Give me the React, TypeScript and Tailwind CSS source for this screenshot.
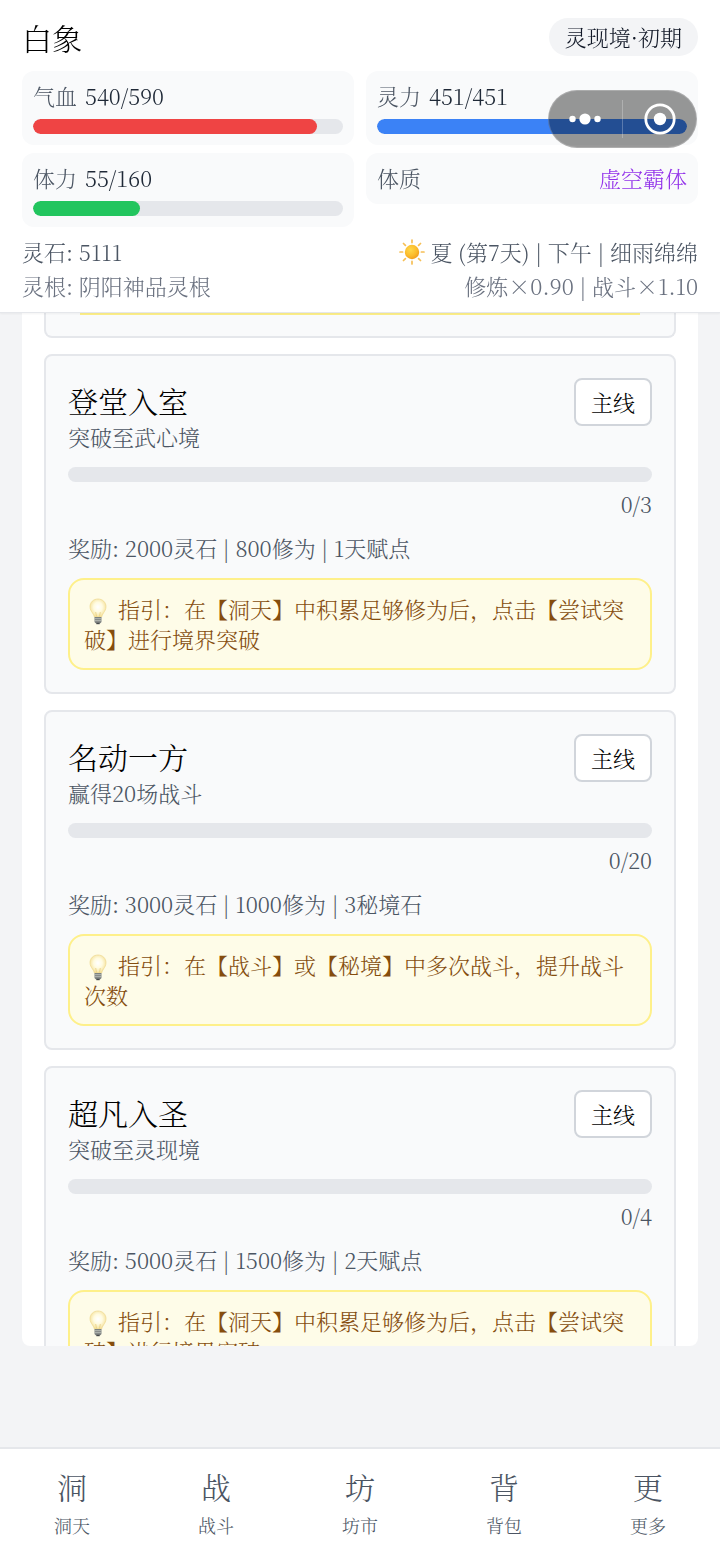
import clsx from 'clsx';

const stats = [
  { label: '气血', value: 540, max: 590, color: 'bg-[#ef4444]' },
  { label: '灵力', value: 451, max: 451, color: 'bg-[#3b82f6]' },
  { label: '体力', value: 55, max: 160, color: 'bg-[#22c55e]' },
];

const quests = [
  {
    title: '登堂入室',
    desc: '突破至武心境',
    current: 0,
    target: 3,
    reward: '2000灵石 | 800修为 | 1天赋点',
    hint: '在【洞天】中积累足够修为后，点击【尝试突破】进行境界突破',
  },
  {
    title: '名动一方',
    desc: '赢得20场战斗',
    current: 0,
    target: 20,
    reward: '3000灵石 | 1000修为 | 3秘境石',
    hint: '在【战斗】或【秘境】中多次战斗，提升战斗次数',
  },
  {
    title: '超凡入圣',
    desc: '突破至灵现境',
    current: 0,
    target: 4,
    reward: '5000灵石 | 1500修为 | 2天赋点',
    hint: '在【洞天】中积累足够修为后，点击【尝试突破】进行境界突破',
  },
];

const tabs = [
  { icon: '洞', label: '洞天' },
  { icon: '战', label: '战斗' },
  { icon: '坊', label: '坊市' },
  { icon: '背', label: '背包' },
  { icon: '更', label: '更多' },
];

function SunIcon() {
  return (
    <svg viewBox="0 0 28 28" className="h-7 w-7 shrink-0" aria-hidden="true">
      <defs>
        <radialGradient id="sun" cx="0.4" cy="0.35" r="0.7">
          <stop offset="0" stopColor="#ffd84a" />
          <stop offset="0.6" stopColor="#fbbc2c" />
          <stop offset="1" stopColor="#f09a1c" />
        </radialGradient>
      </defs>
      <g stroke="#f6bf55" strokeWidth="1.7" strokeLinecap="round">
        <path d="M14 2v2.600M14 23.400V26M2 14h2.600M23.400 14H26M5.500 5.500l1.900 1.900M20.600 20.600l1.900 1.900M5.500 22.500l1.900-1.900M20.600 7.400l1.900-1.900" />
      </g>
      <circle cx="14" cy="14" r="7.2" fill="url(#sun)" />
    </svg>
  );
}

function BulbIcon() {
  return (
    <svg viewBox="0 0 28 28" className="-my-1 mr-[6px] inline-block h-7 w-7 align-middle" aria-hidden="true">
      <defs>
        <radialGradient id="bulb" cx="0.5" cy="0.45" r="0.6">
          <stop offset="0" stopColor="#ffffff" />
          <stop offset="0.45" stopColor="#fffbe0" />
          <stop offset="1" stopColor="#f3dc8c" />
        </radialGradient>
      </defs>
      <path
        d="M14 1c-4.600 0-8 3.300-8 7.700 0 2.700 1.300 4.500 2.500 6.300.9 1.400 1.600 2.600 1.900 4h7.200c.3-1.400 1-2.600 1.900-4C20.700 13.200 22 11.400 22 8.700 22 4.300 18.600 1 14 1z"
        fill="url(#bulb)"
        stroke="#eed98f"
        strokeWidth="0.7"
      />
      <path d="M12.500 18.500l-.8-4.500M15.500 18.500l.8-4.500" fill="none" stroke="#e8cf80" strokeWidth="0.8" />
      <path d="M10.500 19h7v4.500c0 1-1 1.800-2 1.800h-3c-1 0-2-.8-2-1.800z" fill="#7d8280" />
      <path d="M10.500 20.700h7M10.500 22.700h7" stroke="#c5c9c2" strokeWidth="0.8" />
      <path d="M12.300 24.800h3.400v1.400h-3.400z" fill="#45494a" />
    </svg>
  );
}

function Bar({ value, max, color }: { value: number; max: number; color: string }) {
  return (
    <div className="h-[15px] overflow-hidden rounded-full bg-[#e5e7eb]">
      <div className={clsx('h-full rounded-full', color)} style={{ width: `${(value / max) * 100}%` }} />
    </div>
  );
}

function QuestCard({ quest }: { quest: (typeof quests)[number] }) {
  return (
    <article className="rounded-lg border-2 border-[#e5e7eb] bg-[#f9fafb] p-[22px]">
      <div className="flex items-start justify-between">
        <div>
          <h3 className="text-[30px] leading-[44px] text-black">{quest.title}</h3>
          <p className="text-[#4b5563]">{quest.desc}</p>
        </div>
        <button type="button" className="h-12 rounded-lg border-2 border-[#d1d5db] bg-white px-[15px] text-black">
          主线
        </button>
      </div>
      <div className="mt-[15px]">
        <Bar value={quest.current} max={quest.target} color="bg-[#3b82f6]" />
      </div>
      <p className="mt-[7px] text-right text-[#4b5563]">{`${quest.current}/${quest.target}`}</p>
      <p className="mt-[14px] text-[#4b5563]">{`奖励: ${quest.reward}`}</p>
      <div className="mt-[15px] rounded-2xl border-2 border-[#fef08a] bg-[#fefce8] p-[14px] text-[#854d0e]">
        <BulbIcon />
        {`指引：${quest.hint}`}
      </div>
    </article>
  );
}

export default function App() {
  return (
    <div className="relative flex h-screen flex-col bg-[#f3f4f6] font-['Noto_Serif_CJK_SC','Liberation_Serif','Noto_Sans_CJK_SC',serif] text-[22px] leading-[30px] font-light tabular-nums">
      <header className="z-10 border-b border-[#e5e7eb] bg-white px-[22px] pt-[15px] pb-[11px] shadow-xs">
        <div className="mb-3 flex h-11 items-center justify-between">
          <h1 className="text-[30px]">白象</h1>
          <span className="rounded-full bg-[#f3f4f6] px-4 py-1 text-[#111827]">灵现境·初期</span>
        </div>

        <div className="grid grid-cols-2 items-start gap-x-3 gap-y-2">
          {stats.map((s) => (
            <div key={s.label} className="rounded-xl bg-[#f9fafb] px-[11px] pt-[10px] pb-[11px]">
              <div className="mb-2 flex gap-2">
                <span className="text-[#4b5563]">{s.label}</span>
                <span className="text-[#1f2937]">{`${s.value}/${s.max}`}</span>
              </div>
              <Bar value={s.value} max={s.max} color={s.color} />
            </div>
          ))}
          <div className="flex justify-between rounded-xl bg-[#f9fafb] px-[11px] pt-[10px] pb-[11px]">
            <span className="text-[#4b5563]">体质</span>
            <span className="text-[#9333ea]">虚空霸体</span>
          </div>
        </div>

        <div className="mt-[10px] flex items-center justify-between text-[#4b5563]">
          <span>灵石: 5111</span>
          <span className="flex items-center gap-1">
            <SunIcon />夏 (第7天) | 下午 | 细雨绵绵
          </span>
        </div>
        <div className="mt-1 flex items-center justify-between text-[#6b7280]">
          <span>灵根: 阴阳神品灵根</span>
          <span>修炼×0.90 | 战斗×1.10</span>
        </div>
      </header>

      <main className="mx-[22px] mb-[101px] min-h-0 flex-1 overflow-y-auto rounded-b-lg bg-white px-[22px] [scrollbar-width:none]">
        {/* Tail of the previous quest */}
        <div className="mb-4 rounded-b-lg border-2 border-t-0 border-[#e5e7eb] bg-[#f9fafb] px-[34px] pb-[21px]">
          <div className="h-[2px] bg-[#fef08a]" />
        </div>
        <div className="flex flex-col gap-4">
          {quests.map((q) => (
            <QuestCard key={q.title} quest={q} />
          ))}
        </div>
      </main>

      <nav className="grid grid-cols-5 border-t-2 border-[#e5e7eb] bg-white pt-[15px] pb-4">
        {tabs.map((t) => (
          <button key={t.label} type="button" className="flex flex-col items-center gap-1 text-[#4b5563]">
            <span className="text-[30px] leading-[44px]">{t.icon}</span>
            <span className="text-[18px] leading-[26px]">{t.label}</span>
          </button>
        ))}
      </nav>

      {/* Floating mini-program capsule */}
      <div className="absolute top-[90px] right-[23px] z-20 flex h-[58px] w-[149px] items-center rounded-full border border-white/20 bg-black/40">
        <button type="button" aria-label="菜单" className="flex h-full flex-1 items-center justify-center">
          <svg viewBox="0 0 36 14" className="h-[14px] w-9" fill="#fff">
            <circle cx="4.500" cy="7" r="3.200" />
            <circle cx="17" cy="7" r="5.600" />
            <circle cx="29.500" cy="7" r="3.200" />
          </svg>
        </button>
        <span className="h-[38px] w-px bg-white/25" />
        <button type="button" aria-label="关闭" className="flex h-full flex-1 items-center justify-center">
          <svg viewBox="0 0 32 32" className="h-8 w-8">
            <circle cx="16" cy="16" r="14.200" fill="none" stroke="#fff" strokeWidth="2.800" />
            <circle cx="16" cy="16" r="6.200" fill="#fff" />
          </svg>
        </button>
      </div>
    </div>
  );
}
